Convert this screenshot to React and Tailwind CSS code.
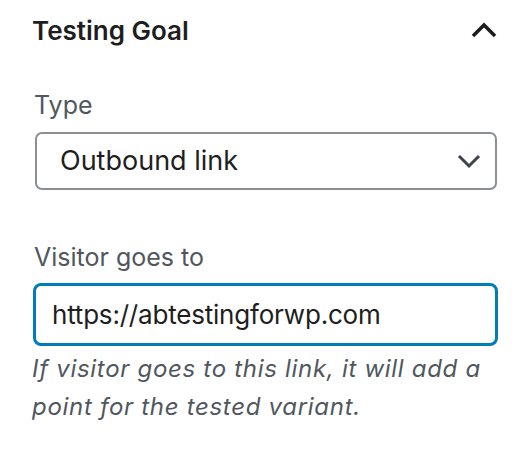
import React from 'react';

const font = { fontFamily: 'Inter, "Noto Sans", sans-serif' };

export default function App() {
  return (
    <div className="w-[522px] h-[460px] bg-white" style={font}>
      <div className="pl-8 pr-6 pt-[13px]">
        <div className="flex items-center justify-between h-[36px]">
          <h2 className="text-[26px] font-semibold text-[#1e1e1e] leading-none">Testing Goal</h2>
          <svg width="28" height="20" viewBox="0 0 28 20" className="-mt-[2px]">
            <path d="M3 16 L14 5 L25 16" fill="none" stroke="#1e1e1e" strokeWidth="3.6" />
          </svg>
        </div>

        <div className="mt-[40px] pr-[1px]">
          <label className="block text-[25px] leading-[32px] text-[#50575e] ml-[2px]">Type</label>
          <div className="mt-[11px] ml-[3px] h-[58px] border-2 border-[#8c8f94] rounded-[7px] flex items-center justify-between pl-[23px] pr-[14px]">
            <span className="text-[27px] text-[#1e1e1e]">Outbound link</span>
            <svg width="24" height="16" viewBox="0 0 24 16">
              <path d="M2 3 L12 13 L22 3" fill="none" stroke="#3c434a" strokeWidth="3" />
            </svg>
          </div>
        </div>

        <div className="mt-[51px]">
          <label className="block text-[25px] leading-[32px] text-[#50575e] ml-[2px]">Visitor goes to</label>
          <div className="mt-[10px] ml-[1px] h-[63px] border-[3px] border-[#007cba] rounded-[8px] flex items-center pl-[16px]">
            <span className="text-[26px] text-[#1e1e1e] tracking-[-0.2px]">https://abtestingforwp.com</span>
          </div>
          <p className="mt-[4px] text-[24px] leading-[38px] italic text-[#50575e] tracking-[0.7px]">
            If visitor goes to this link, it will add a point for the tested variant.
          </p>
        </div>
      </div>
    </div>
  );
}
